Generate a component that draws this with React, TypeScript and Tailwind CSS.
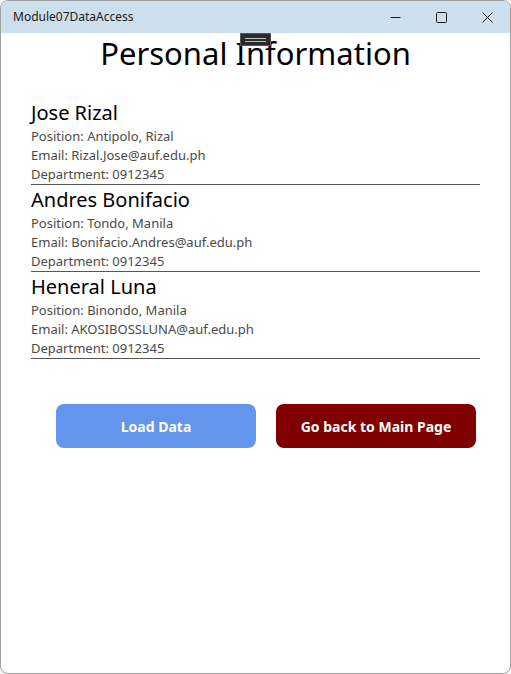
import React from "react";

const people = [
  {
    name: "Jose Rizal",
    position: "Antipolo, Rizal",
    email: "Rizal.Jose@auf.edu.ph",
    department: "0912345",
  },
  {
    name: "Andres Bonifacio",
    position: "Tondo, Manila",
    email: "Bonifacio.Andres@auf.edu.ph",
    department: "0912345",
  },
  {
    name: "Heneral Luna",
    position: "Binondo, Manila",
    email: "AKOSIBOSSLUNA@auf.edu.ph",
    department: "0912345",
  },
];

const TitleBar = () => {
  return (
    <div className="flex h-[32px] items-center bg-[#cddfec] rounded-t-[8px]">
      <span className="pl-[12px] text-[12px] text-[#1b1b1b]">
        Module07DataAccess
      </span>
      <div className="ml-auto flex h-full items-center">
        {/* minimize */}
        <div className="flex h-full w-[46px] items-center justify-center">
          <svg width="11" height="11" viewBox="0 0 11 11">
            <path d="M0.5 5.5h10" stroke="#1b1b1b" strokeWidth="1" />
          </svg>
        </div>
        {/* maximize */}
        <div className="flex h-full w-[46px] items-center justify-center">
          <svg width="11" height="11" viewBox="0 0 11 11">
            <rect
              x="0.5"
              y="0.5"
              width="10"
              height="10"
              rx="1"
              fill="none"
              stroke="#1b1b1b"
              strokeWidth="1"
            />
          </svg>
        </div>
        {/* close */}
        <div className="flex h-full w-[46px] items-center justify-center">
          <svg width="11" height="11" viewBox="0 0 11 11">
            <path d="M0.5 0.5l10 10M10.5 0.5l-10 10" stroke="#1b1b1b" strokeWidth="1" />
          </svg>
        </div>
      </div>
    </div>
  );
};

const PersonCard = ({ person }: { person: (typeof people)[number] }) => {
  return (
    <div className="border-b border-[#555555]">
      <div className="text-[20px] leading-[29px] text-black">{person.name}</div>
      <div className="text-[13px] leading-[19px] text-[#4a4a4a]">
        Position: {person.position}
      </div>
      <div className="text-[13px] leading-[19px] text-[#4a4a4a]">
        Email: {person.email}
      </div>
      <div className="text-[13px] leading-[19px] text-[#4a4a4a]">
        Department: {person.department}
      </div>
    </div>
  );
};

export default function App() {
  return (
    <div className="h-[674px] w-[511px] bg-[#f3f3f3] font-['Noto_Sans',sans-serif]">
      <div className="relative flex h-full flex-col rounded-[8px] border border-[#a0a0a0] bg-white">
        <TitleBar />

        {/* drag handle overlay */}
        <div className="absolute left-[239px] top-[32px] flex h-[13px] w-[31px] flex-col items-center justify-center gap-[2px] border border-[#555555] bg-[#2b2b2b]">
          <div className="h-px w-[21px] bg-[#bbbbbb]" />
          <div className="h-px w-[21px] bg-[#bbbbbb]" />
        </div>

        <h1 className="text-center text-[31px] leading-[40px] text-black">
          Personal Information
        </h1>

        <div className="mt-[25px] flex flex-col px-[30px]">
          {people.map((p) => (
            <PersonCard key={p.name} person={p} />
          ))}
        </div>

        <div className="mt-[45px] flex gap-[20px] pl-[55px]">
          <button className="h-[44px] w-[200px] rounded-[8px] bg-[#6495ed] text-[14px] font-bold text-white">
            Load Data
          </button>
          <button className="h-[44px] w-[200px] rounded-[8px] bg-[#800000] text-[14px] font-bold text-white">
            Go back to Main Page
          </button>
        </div>
      </div>
    </div>
  );
}
